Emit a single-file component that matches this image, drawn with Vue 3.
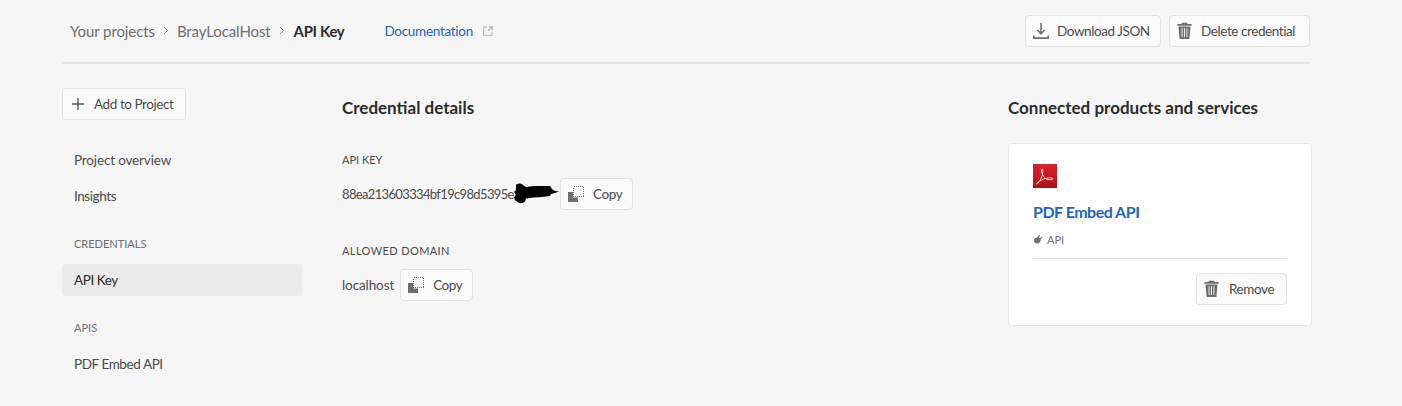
<script setup>
</script>

<template>
  <div class="page">
    <header class="top">
      <nav class="crumbs">
        <span class="crumb">Your projects</span>
        <svg class="chev" width="6" height="9" viewBox="0 0 6 9"><path d="M1 1l3.500 3.500L1 8" fill="none" stroke="#8e8e8e" stroke-width="1"/></svg>
        <span class="crumb">BrayLocalHost</span>
        <svg class="chev" width="6" height="9" viewBox="0 0 6 9"><path d="M1 1l3.500 3.500L1 8" fill="none" stroke="#8e8e8e" stroke-width="1"/></svg>
        <strong class="current">API Key</strong>
        <a class="doc">Documentation</a>
        <svg class="ext" width="10" height="10" viewBox="0 0 10 10"><path d="M4 1H.7v8.300H9V6M6 .7h3.300V4M9 1L5 5" fill="none" stroke="#b3b3b3" stroke-width="1.100"/></svg>
      </nav>
      <div class="actions">
        <button class="btn dl">
          <svg width="16" height="16" viewBox="0 0 16 16"><path d="M8 0v10M4.400 7L8 10.800 11.600 7" fill="none" stroke="#6e6e6e" stroke-width="1.600"/><path d="M0 12.500h1.600v1.800h12.800v-1.800H16V16H0z" fill="#6e6e6e"/></svg>
          <span class="tight">Download JSON</span>
        </button>
        <button class="btn del">
          <svg width="15" height="17" viewBox="0 0 16 18"><path d="M5 2V.6h6V2h4.600v1.800H.4V2zM1.600 4.800h12.800L13.200 18H2.800z" fill="#6e6e6e"/><path d="M5.400 6.500v9.500M8 6.500v9.500M10.600 6.500v9.500" stroke="#f5f5f5" stroke-width="1"/></svg>
          <span class="tight">Delete credential</span>
        </button>
      </div>
    </header>

    <div class="body">
      <aside class="side">
        <button class="btn add">
          <svg width="12" height="12" viewBox="0 0 12 12"><path d="M6 0v12M0 6h12" stroke="#555" stroke-width="1.400"/></svg>
          <span class="tight">Add to Project</span>
        </button>
        <a class="item first">Project overview</a>
        <a class="item"><span class="tight">Insights</span></a>
        <div class="sect">CREDENTIALS</div>
        <a class="item active"><span class="tight">API Key</span></a>
        <div class="sect">APIS</div>
        <a class="item"><span class="tight">PDF Embed API</span></a>
      </aside>

      <main class="main">
        <h2 class="h">Credential details</h2>
        <div class="label l1">API KEY</div>
        <div class="row">
          <span class="value key">88ea213603334bf19c98d5395e
            <svg class="scribble" width="46" height="22" viewBox="0 0 46 22"><path d="M3 2C5 0 8 0 10 2l3 2 8-1 9 0 7 0 2 3 3 2 4 .5-4 1.500-4 1-1 2-8 1-8 .5-8 1-1 3c-2 2-5 2-7 1L2 17l-1-3 2-2-2-3 2-2z" fill="#000"/></svg>
          </span>
          <button class="btn copy">
            <svg width="16" height="16" viewBox="0 0 16 16"><path d="M0 6h5v5.500h5V16H0z" fill="#6e6e6e"/><rect x="5.500" y=".5" width="10" height="10" fill="none" stroke="#777" stroke-width="1" stroke-dasharray="1 1" shape-rendering="crispEdges"/></svg>
            <span class="tight">Copy</span>
          </button>
        </div>
        <div class="label l2">ALLOWED DOMAIN</div>
        <div class="row">
          <span class="value host">localhost</span>
          <button class="btn copy">
            <svg width="16" height="16" viewBox="0 0 16 16"><path d="M0 6h5v5.500h5V16H0z" fill="#6e6e6e"/><rect x="5.500" y=".5" width="10" height="10" fill="none" stroke="#777" stroke-width="1" stroke-dasharray="1 1" shape-rendering="crispEdges"/></svg>
            <span class="tight">Copy</span>
          </button>
        </div>
      </main>

      <section class="right">
        <h2 class="h">Connected products and services</h2>
        <div class="card">
          <svg class="pdf" width="24" height="24" viewBox="0 0 24 24">
            <defs><linearGradient id="pg" x1="0" y1="0" x2="0" y2="1"><stop offset="0" stop-color="#d8232a"/><stop offset="1" stop-color="#a81419"/></linearGradient></defs>
            <rect width="24" height="24" fill="url(#pg)"/>
            <path d="M3.500 20c2-1 4-4 5.500-8 .8-2.500 1.200-6 .4-7-.9-.6-1.200 1-.8 3 .8 3 2.500 5.500 4.500 7 2 1 6 1 7-.2-.5-1.500-5.500-1-9 0-2.500 1-6.200 3.800-7.600 5.200z" fill="none" stroke="#f7dcdc" stroke-width=".9"/>
          </svg>
          <a class="title">PDF Embed API</a>
          <div class="tag">
            <svg width="11" height="11" viewBox="0 0 11 11"><path d="M1 6.500C1 4.500 2.500 3.500 4 3.500L6.500 .8l.8.7-1.700 2 1.200 1 2.200-1.700.6.800-2 1.800c.3 2-1 4-3 4C2.300 9.500 1 8.300 1 6.500z" fill="#6e6e6e"/></svg>
            <span>API</span>
          </div>
          <div class="foot">
            <button class="btn rem">
              <svg width="15" height="17" viewBox="0 0 16 18"><path d="M5 2V.6h6V2h4.600v1.800H.4V2zM1.600 4.800h12.800L13.200 18H2.800z" fill="#6e6e6e"/><path d="M5.400 6.500v9.500M8 6.500v9.500M10.600 6.500v9.500" stroke="#f7f7f7" stroke-width="1"/></svg>
              <span class="tight">Remove</span>
            </button>
          </div>
        </div>
      </section>
    </div>
  </div>
</template>

<style>
html, body { margin: 0; background: #f5f5f5; }
</style>

<style scoped>
.page {
  width: 1402px;
  height: 406px;
  box-sizing: border-box;
  padding: 15px 92px 0 62px;
  background: #f5f5f5;
  font-family: "Lato", "Open Sans", sans-serif;
  font-size: 13.500px;
  letter-spacing: -.15px;
  color: #4b4b4b;
  overflow: hidden;
}
.tight { letter-spacing: -.42px; }
.top {
  display: flex;
  justify-content: space-between;
  align-items: flex-start;
  height: 47px;
  border-bottom: 2px solid #e3e3e3;
}
.crumbs {
  display: flex;
  align-items: center;
  height: 31px;
  padding-left: 8px;
  font-size: 15px;
  letter-spacing: -.1px;
}
.crumb { color: #6e6e6e; }
.chev { margin: 0 8px; }
.current { margin-left: 1px; color: #2c2c2c; font-weight: 700; letter-spacing: -.35px; }
.doc { color: #2465b5; font-size: 13.500px; letter-spacing: -.28px; margin-left: 40px; }
.ext { margin-left: 10px; }
.actions { display: flex; gap: 8px; }
.btn {
  display: inline-flex;
  align-items: center;
  box-sizing: border-box;
  height: 32px;
  padding: 0 0 1px;
  background: #fafafa;
  border: 1px solid #e1e1e1;
  border-radius: 4px;
  font: inherit;
  letter-spacing: inherit;
  color: #4b4b4b;
}
.dl { width: 136px; padding-left: 7px; gap: 8px; }
.del { width: 141px; padding-left: 7px; gap: 9px; }
.body { display: flex; }
.side { width: 240px; margin-right: 40px; padding-top: 24px; flex: none; }
.add { width: 124px; padding-left: 9px; gap: 10px; }
.item {
  display: flex;
  align-items: center;
  box-sizing: border-box;
  height: 32px;
  padding: 0 0 0 12px;
  border-radius: 4px;
  color: #4b4b4b;
}
.item.first { margin-top: 24px; margin-bottom: 4px; }
.item.active { background: #eaeaea; color: #2c2c2c; }
.sect {
  height: 14px;
  line-height: 14px;
  margin: 25px 0 13px;
  padding-left: 12px;
  font-size: 11px;
  letter-spacing: 0;
  color: #6e6e6e;
}
.main { width: 666px; flex: none; padding-top: 33px; }
.right { width: 304px; flex: none; padding-top: 33px; }
.h {
  margin: 0;
  height: 22px;
  line-height: 22px;
  font-size: 17px;
  font-weight: 700;
  letter-spacing: 0;
  color: #2c2c2c;
}
.label {
  height: 14px;
  line-height: 14px;
  font-size: 11px;
  letter-spacing: .4px;
  color: #4b4b4b;
}
.l1 { margin-top: 34px; letter-spacing: 0; }
.l2 { margin-top: 34px; }
.row { display: flex; align-items: center; margin-top: 11px; }
.value { position: relative; white-space: nowrap; padding-bottom: 1px; }
.key { width: 212px; font-size: 13px; letter-spacing: -.65px; }
.host { letter-spacing: -.1px; }
.scribble { position: absolute; left: 171px; top: -3px; }
.copy { width: 73px; margin-left: 6px; padding-left: 7px; gap: 9px; }
.card {
  box-sizing: border-box;
  width: 304px;
  height: 183px;
  margin-top: 24px;
  padding: 20px 24px 0 24px;
  background: #fff;
  border: 1px solid #e6e6e6;
  border-radius: 4px;
}
.pdf { display: block; }
.title { display: block; margin-top: 13px; line-height: 22px; font-size: 16px; font-weight: 700; letter-spacing: -.5px; color: #2465b5; }
.tag {
  display: flex;
  align-items: center;
  gap: 3px;
  margin-top: 9px;
  height: 14px;
  font-size: 11px;
  letter-spacing: 0;
  color: #6e6e6e;
}
.foot {
  display: flex;
  justify-content: flex-end;
  margin-top: 12px;
  padding-top: 14px;
  border-top: 1px solid #e6e6e6;
}
.rem { width: 91px; padding-left: 7px; gap: 10px; }
</style>
